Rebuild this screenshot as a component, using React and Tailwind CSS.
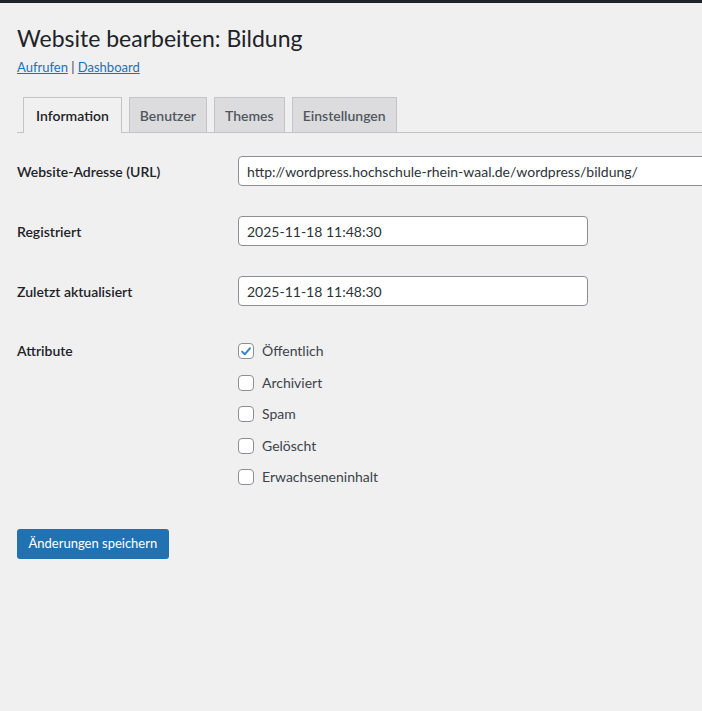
import React, { useState } from "react";

const font = "font-['Lato','Noto_Sans',sans-serif]";

const tabs = ["Information", "Benutzer", "Themes", "Einstellungen"];

const attrs = [
  { label: "Öffentlich", checked: true },
  { label: "Archiviert", checked: false },
  { label: "Spam", checked: false },
  { label: "Gelöscht", checked: false },
  { label: "Erwachseneninhalt", checked: false },
];

function Checkbox({ checked, onChange }) {
  return (
    <button
      type="button"
      onClick={onChange}
      className="flex h-4 w-4 items-center justify-center rounded-[4px] border border-[#8c8f94] bg-white"
    >
      {checked && (
        <svg viewBox="0 0 16 16" className="h-[15px] w-[15px]">
          <path d="M3.6 8.2 L6.6 11.2 L12.6 4.2" fill="none" stroke="#3582c4" strokeWidth="2.2" strokeLinecap="round" strokeLinejoin="round" />
        </svg>
      )}
    </button>
  );
}

function Row({ label, children }) {
  return (
    <div className="grid grid-cols-[221px_1fr] items-center">
      <div className="text-[14px] font-semibold text-[#1d2327]">{label}</div>
      <div>{children}</div>
    </div>
  );
}

export default function App() {
  const [active] = useState(0);
  const [checks, setChecks] = useState(attrs.map((a) => a.checked));

  return (
    <div className={`min-h-[711px] w-[702px] overflow-hidden bg-[#f0f0f1] text-[#3c434a] ${font}`}>
      <div className="h-[3px] bg-[#1d2327]" />
      <div className="pl-[17px]">
        <h1 className="pt-[21px] text-[23px] font-normal leading-[29px] text-[#1d2327]">Website bearbeiten: Bildung</h1>
        <p className="mt-[5px] text-[13px] leading-[18px]">
          <a href="#" className="text-[#2271b1] underline">Aufrufen</a>
          <span className="text-[#3c434a]"> | </span>
          <a href="#" className="text-[#2271b1] underline">Dashboard</a>
        </p>

        {/* tabs */}
        <div className="mt-[21px] flex items-end gap-[7px] border-b border-[#c3c4c7] pl-[6px]">
          {tabs.map((t, i) => (
            <div
              key={t}
              className={
                i === active
                  ? "-mb-px flex h-[36px] items-center border border-b-0 border-[#c3c4c7] bg-[#f0f0f1] px-[12px] text-[14px] font-semibold text-[#1d2327]"
                  : "flex h-[35px] items-center border border-b-0 border-[#c3c4c7] bg-[#dcdcde] px-[10px] text-[14px] font-semibold text-[#50575e]"
              }
            >
              {t}
            </div>
          ))}
        </div>

        {/* form */}
        <div className="mt-[23px] flex flex-col gap-[30px]">
          <Row label="Website-Adresse (URL)">
            <input
              readOnly
              value="http://wordpress.hochschule-rhein-waal.de/wordpress/bildung/"
              className="h-[30px] w-[480px] rounded-[4px] border border-[#8c8f94] bg-white px-[8px] text-[14px] text-[#2c3338] outline-none"
            />
          </Row>
          <Row label="Registriert">
            <input
              readOnly
              value="2025-11-18 11:48:30"
              className="h-[30px] w-[350px] rounded-[4px] border border-[#8c8f94] bg-white px-[8px] text-[14px] text-[#2c3338] outline-none"
            />
          </Row>
          <Row label="Zuletzt aktualisiert">
            <input
              readOnly
              value="2025-11-18 11:48:30"
              className="h-[30px] w-[350px] rounded-[4px] border border-[#8c8f94] bg-white px-[8px] text-[14px] text-[#2c3338] outline-none"
            />
          </Row>
          <div className="grid grid-cols-[221px_1fr] items-start">
            <div className="pt-[4px] text-[14px] font-semibold text-[#1d2327]">Attribute</div>
            <div className="flex flex-col gap-[11.5px] pt-[5px]">
              {attrs.map((a, i) => (
                <label key={a.label} className="flex items-center gap-[8px] text-[14px] leading-[20px] text-[#3c434a]">
                  <Checkbox
                    checked={checks[i]}
                    onChange={() => setChecks((c) => c.map((v, j) => (j === i ? !v : v)))}
                  />
                  {a.label}
                </label>
              ))}
            </div>
          </div>
        </div>

        <button
          type="button"
          className="mt-[42px] h-[30px] rounded-[3px] bg-[#2271b1] px-[11.5px] text-[13px] text-white"
        >
          Änderungen speichern
        </button>
      </div>
    </div>
  );
}
